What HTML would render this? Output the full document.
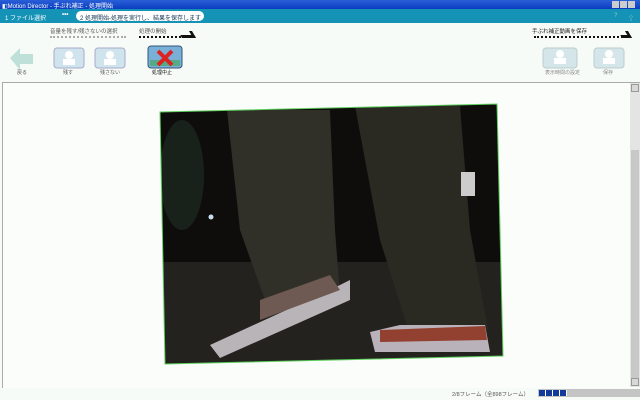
<!DOCTYPE html>
<html><head><meta charset="utf-8"><style>
*{margin:0;padding:0;box-sizing:border-box}
body{width:640px;height:400px;overflow:hidden;background:#f7fbf7;font-family:"Liberation Sans","Noto Sans CJK JP",sans-serif;position:relative}
.a{position:absolute}
.t{font-size:6px;color:#555;white-space:nowrap}
</style></head><body>
<div class="a" style="left:0;top:0;width:640px;height:9px;background:linear-gradient(#2a5fd8,#0a3cc0)"></div>
<div class="a t" style="left:2px;top:1px;color:#fff;font-size:6px">◧Motion Director - 手ぶれ補正 - 処理開始</div>
<div class="a" style="left:612px;top:1px;width:7px;height:7px;background:#ccc"></div>
<div class="a" style="left:620px;top:1px;width:7px;height:7px;background:#ccc"></div>
<div class="a" style="left:628px;top:1px;width:7px;height:7px;background:#ccc"></div>
<div class="a" style="left:0;top:9px;width:640px;height:14px;background:#1593b6"></div>
<div class="a t" style="left:5px;top:13px;color:#fff">1 ファイル選択</div>
<div class="a t" style="left:62px;top:12px;color:#fff;font-weight:bold">•••</div>
<div class="a" style="left:76px;top:11px;width:128px;height:10px;background:#fff;border-radius:5px"></div>
<div class="a t" style="left:80px;top:13px;color:#135">2 処理開始-処理を実行し、結果を保存します</div>
<div class="a t" style="left:614px;top:13px;color:#8cc">?</div>
<div class="a t" style="left:628px;top:13px;color:#8cc">⇧</div>
<div class="a t" style="left:50px;top:27px;font-size:5.5px">音量を残す/残さないの選択</div>
<div class="a" style="left:50px;top:36px;width:76px;border-top:2px dotted #aaa"></div>
<div class="a t" style="left:139px;top:27px;font-size:5.5px">処理の開始</div>
<div class="a" style="left:139px;top:36px;width:54px;border-top:2px dotted #111"></div>
<div class="a" style="left:180px;top:31px;width:14px;height:7px;border-right:3px solid #111;border-bottom:3px solid #111;transform:skewX(30deg)"></div>
<div class="a t" style="left:532px;top:27px;font-size:5.5px;color:#222">手ぶれ補正動画を保存</div>
<div class="a" style="left:534px;top:36px;width:92px;border-top:2px dotted #111"></div>
<div class="a" style="left:620px;top:31px;width:10px;height:7px;border-right:3px solid #111;border-bottom:3px solid #111;transform:skewX(30deg)"></div>
<svg class="a" style="left:0;top:40px" width="640" height="42">
<polygon points="10,18 20,8 20,14 33,14 33,24 20,24 20,30" fill="#bfe0d8"/>
<rect x="54" y="8" width="30" height="20" rx="3" fill="#cfe4ec" stroke="#aac"/>
<circle cx="69" cy="15" r="4" fill="#fff"/><rect x="63" y="19" width="12" height="6" fill="#fff"/>
<rect x="95" y="8" width="30" height="20" rx="3" fill="#cfe4ec" stroke="#aac"/>
<circle cx="110" cy="15" r="4" fill="#fff"/><rect x="104" y="19" width="12" height="6" fill="#fff"/>
<rect x="148" y="6" width="34" height="22" rx="3" fill="#7ab0d8" stroke="#357"/>
<rect x="150" y="20" width="30" height="6" fill="#5a8"/>
<path d="M158 11 L172 25 M172 11 L158 25" stroke="#d22" stroke-width="4"/>
<rect x="543" y="8" width="34" height="20" rx="3" fill="#d5e6ea" stroke="#bcc"/>
<circle cx="560" cy="14" r="4" fill="#fff"/><rect x="554" y="18" width="12" height="6" fill="#fff"/>
<rect x="594" y="8" width="30" height="20" rx="3" fill="#d5e6ea" stroke="#bcc"/>
<circle cx="609" cy="14" r="4" fill="#fff"/><rect x="603" y="18" width="12" height="6" fill="#fff"/>
</svg>
<div class="a t" style="left:17px;top:69px;font-size:5px">戻る</div>
<div class="a t" style="left:63px;top:69px;font-size:5px">残す</div>
<div class="a t" style="left:100px;top:69px;font-size:5px">残さない</div>
<div class="a t" style="left:152px;top:69px;font-size:5px;color:#111">処理中止</div>
<div class="a t" style="left:545px;top:69px;font-size:5px;color:#888">表示時間の設定</div>
<div class="a t" style="left:603px;top:69px;font-size:5px;color:#888">保存</div>
<div class="a" style="left:2px;top:82px;width:638px;height:306px;border-top:1px solid #aaa;border-left:1px solid #aaa;background:#fafdfa"></div>
<div class="a" style="left:630px;top:83px;width:10px;height:304px;background:#e4e4e4"></div>
<div class="a" style="left:631px;top:84px;width:8px;height:8px;background:#d8d8d8;border:1px solid #999"></div>
<div class="a" style="left:631px;top:150px;width:8px;height:230px;background:#c8c8c8"></div>
<div class="a" style="left:631px;top:378px;width:8px;height:8px;background:#d8d8d8;border:1px solid #999"></div>
<svg class="a" style="left:0;top:0" width="640" height="400">
<defs><clipPath id="c"><polygon points="160,112 497,104 503,356 165,364"/></clipPath></defs>
<polygon points="160,112 497,104 503,356 165,364" fill="#0e0d0b"/>
<g clip-path="url(#c)">
<rect x="160" y="262" width="345" height="110" fill="#24221f"/>
<ellipse cx="182" cy="175" rx="22" ry="55" fill="#18221a"/>
<path d="M227 110 L330 110 L335 230 L340 295 L265 300 L240 230 Z" fill="#302f28"/>
<path d="M355 106 L460 106 L470 230 L488 330 L410 335 L380 240 Z" fill="#2a2a23"/>
<path d="M210 345 L330 290 L350 280 L350 300 L220 358 Z" fill="#b8b4b8"/>
<path d="M260 300 L330 275 L340 290 L260 320 Z" fill="#6e5a52"/>
<path d="M370 332 L400 325 L485 325 L490 352 L375 352 Z" fill="#bab2ba"/>
<path d="M380 330 L485 326 L487 340 L380 342 Z" fill="#92402f"/>
<rect x="461" y="172" width="14" height="24" fill="#ccc"/>
<circle cx="211" cy="217" r="2.5" fill="#cde"/>
</g>
<polygon points="160,112 497,104 503,356 165,364" fill="none" stroke="#5bd05b" stroke-width="1"/>
</svg>
<div class="a t" style="left:452px;top:390px;font-size:5.5px">2/8フレーム（全898フレーム）</div>
<div class="a" style="left:538px;top:389px;width:102px;height:8px;background:#c4c4c4"></div>
<div class="a" style="left:539px;top:390px;width:28px;height:6px;background:repeating-linear-gradient(90deg,#123a9a 0 6px,#fff 6px 7px)"></div>
</body></html>
